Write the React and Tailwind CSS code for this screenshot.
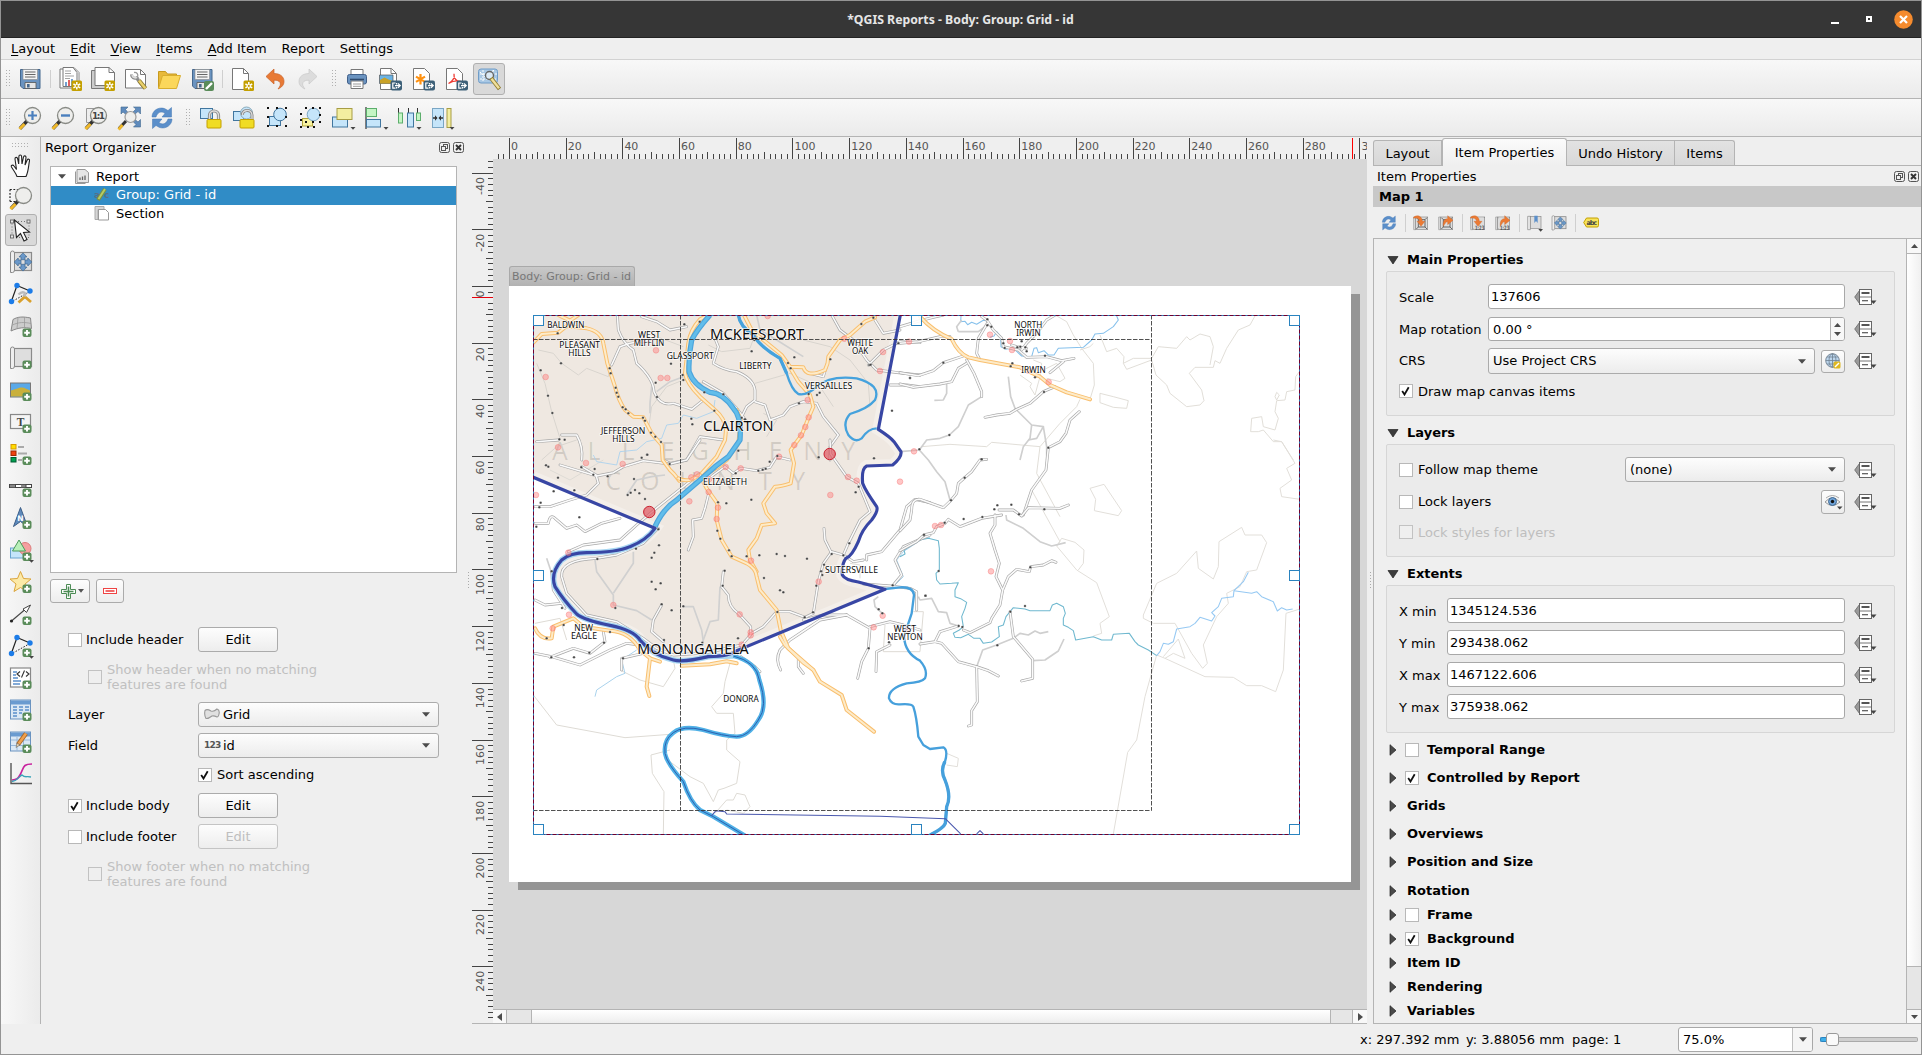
import React from "react";

/* ------------------------------------------------------------------ */
/* Icons                                                               */
/* ------------------------------------------------------------------ */

const Svg = ({ s = 24, children, className = "" }) => (
  <svg width={s} height={s} viewBox="0 0 24 24" fill="none" className={"shrink-0 overflow-visible " + className}>
    {children}
  </svg>
);

const Plus = () => (
  <g>
    <rect x="13.5" y="14.5" width="9" height="8.5" rx="2" fill="#5a8c5a" />
    <path d="M18 16v5.5M15.2 18.8h5.6" stroke="#fff" strokeWidth="1.9" />
  </g>
);
const NewBadge = () => (
  <g>
    <rect x="13.5" y="13.5" width="10.5" height="10.5" rx="1.5" fill="#c4a000" />
    <path d="M18.8 15v7.6M15.4 17l6.8 3.8M22.2 17l-6.8 3.8" stroke="#fff" strokeWidth="1.5" />
    <circle cx="18.8" cy="18.9" r="1.1" fill="#c4a000" />
  </g>
);
const ExportBadge = () => (
  <g>
    <rect x="12.5" y="13.5" width="11.5" height="10" rx="2" fill="#3d6078" />
    <path d="M17.5 16h-2.7v5.2h2.7M17 18.6h4.5M20 16.5l2.2 2.1-2.2 2.1M18.6 16v1.4M18.6 20v1.4" stroke="#fff" strokeWidth="1.2" />
  </g>
);
const DropMark = ({ x = 20, y = 21 }) => <path d={`M${x} ${y}h5l-2.5 2.8z`} fill="#444" />;
const Floppy = () => (
  <g>
    <path d="M2.5 2.5h19.500v19h-17l-2.500-2.500z" fill="#6a93c0" stroke="#45688e" />
    <rect x="5" y="2.500" width="14.500" height="10" fill="#f4f4f4" stroke="#888" strokeWidth=".6" />
    <path d="M7 5h10.500M7 7.500h10.500M7 10h10.500" stroke="#666" strokeWidth="1" />
    <path d="M7 15.500h11v6h-11z" fill="#e6e6e6" stroke="#555" strokeWidth=".8" />
    <rect x="9" y="17" width="2.600" height="3.500" fill="#45688e" />
  </g>
);
const Page = ({ x = 3 }) => <path d={`M${x} 1.500h11l5 5v16h-16z`} fill="#fff" stroke="#777" />;
const Wrench = () => (
  <g>
    <path d="M7.500 7.500c0 3 3 4.500 5 3.500l7 9" stroke="#888" strokeWidth="3" />
    <path d="M8 8c.5 2.500 3 3.500 5 2.500" stroke="#ddd" strokeWidth="1.600" />
    <path d="M10 5.500c3-.5 4.500 2 3.500 4.500l1.500 2" stroke="#999" strokeWidth="1.300" />
    <path d="M15 13.500l6.500 8" stroke="#8d7a2c" strokeWidth="4.200" />
    <path d="M15 13.500l6.300 7.700" stroke="#e9d06b" strokeWidth="2.600" />
  </g>
);
const Lens = ({ children }) => (
  <g>
    <path d="M9 15l-7 7.500" stroke="#333" strokeWidth="3.400" />
    <path d="M6.500 18l-5 5" stroke="#f0b92b" strokeWidth="3" />
    <circle cx="14.500" cy="9.500" r="8" fill="#eeeeec" stroke="#888a85" strokeWidth="1.300" />
    {children}
  </g>
);
const Refresh = () => (
  <g fill="#5b8fca" stroke="#4377b3" strokeWidth=".5">
    <path d="M2 11C2 5 8 0.500 14.500 2.500l3.500 2 3.500-3v9.500h-9.500l3-3.500c-4-3-7.500-1-9 3.500z" />
    <path d="M22 13c0 6-6 10.500-12.500 8.500l-3.500-2-3.500 3v-9.500h9.500l-3 3.500c4 3 7.500 1 9-3.500z" />
  </g>
);
const Ptr = ({ x, y, r }) => <path transform={`translate(${x} ${y}) rotate(${r})`} d="M0-3.600l4 4h-2v2.800h-4v-2.800h-2z" fill="#6a98c9" stroke="#41688f" strokeWidth=".7" />;
const Ptrs = () => (
  <g>
    <Ptr x={14} y={6.500} r={0} /><Ptr x={8.800} y={12} r={-90} /><Ptr x={19.200} y={12} r={90} /><Ptr x={14} y={17.500} r={180} />
  </g>
);
const Scroll = () => (
  <g>
    <rect x="4.500" y="2.500" width="18" height="18" fill="#dedede" stroke="#8a8a8a" strokeWidth="1.200" />
    <path d="M1.500 22.500V3q0-2 2-2t2 2v17q0 2.500-2 2.500z" fill="#eee" stroke="#8a8a8a" />
  </g>
);
const Grips = ({ at }) => <g fill="#111">{at.map(([x, y], i) => <rect key={i} x={x} y={y} width="2" height="2" />)}</g>;

const icons = {
  save: <Floppy />,
  newReport: (
    <g>
      <path d="M2 2h11l4 4v15H2z" fill="#fff" stroke="#777" /><path d="M5 .5h11l5 5v16.500" fill="#fff" stroke="#888" />
      <path d="M5 .500v19h14v-14l-4-5z" fill="#fff" stroke="#777" />
      <path d="M7 4h6M7 6.500h6M7 9h9M7 11.500h5" stroke="#999" strokeWidth=".9" />
      <path d="M8 19v-4" stroke="#729fcf" strokeWidth="2" /><path d="M11 19v-6" stroke="#e06060" strokeWidth="2" /><path d="M14 19v-7" stroke="#729fcf" strokeWidth="2" />
      <NewBadge />
    </g>
  ),
  duplicate: (
    <g>
      <path d="M.500 3.500v18h15v-18z" fill="#ccc" stroke="#777" />
      <path d="M4 .500h14l5.500 5v13H4z" fill="#fff" stroke="#777" /><path d="M18 .500v5h5.500" stroke="#777" /><NewBadge />
    </g>
  ),
  manager: (
    <g><path d="M1.500 2.500h15l5 5v13.500h-20z" fill="#fff" stroke="#777" /><path d="M16.500 2.500v5h5" stroke="#777" /><Wrench /></g>
  ),
  folder: (
    <g><path d="M1.500 21V4.500h7l2 2.500h9v4" fill="#e8b93a" stroke="#c79a1e" /><path d="M1.500 21.500L5.500 8.500h18l-4 13z" fill="#fbd75b" stroke="#d9ae2e" /></g>
  ),
  saveAs: (
    <g><Floppy /><rect x="14" y="14" width="10" height="10" rx="2" fill="#5a8c5a" /><path d="M16 22l6-6" stroke="#fff" strokeWidth="2.400" /></g>
  ),
  newPage: (
    <g><Page x={2.5} /><path d="M13.500 1.500v5h5" stroke="#777" /><NewBadge /></g>
  ),
  undo: <path d="M3 9.500L11 2v4.500c6 0 10 3 10 8 0 3.500-2.500 6-6 7.500 2-2.500 3-4.500 2-6.500-1-1.800-3-2.300-6-2.300V17z" fill="#e87a35" stroke="#c9612a" strokeWidth=".7" />,
  redo: <path d="M21 9.500L13 2v4.500c-6 0-10 3-10 8 0 3.500 2.500 6 6 7.500-2-2.500-3-4.500-2-6.500 1-1.800 3-2.300 6-2.300V17z" fill="#dcdcdc" stroke="#c8c8c8" strokeWidth=".7" />,
  print: (
    <g><path d="M6 8V2.500h12V8" fill="#fff" stroke="#777" /><rect x="2.500" y="7.500" width="19" height="9.500" rx="2" fill="#6a93c0" stroke="#41608a" /><path d="M5 12.500h14" stroke="#2f4a6d" strokeWidth="1.600" /><path d="M6 14h12v7.500H6z" fill="#fff" stroke="#777" /><path d="M8 17h8M8 19.300h8" stroke="#999" /></g>
  ),
  image: (
    <g><Page x={2.5} /><path d="M1.500 8h13.500v8.500H1.500z" fill="#6bb4e6" stroke="#555" strokeWidth=".7" /><path d="M2 16.500v-3.500l4.500-2.500 4 2 4.500 1.500v2.500z" fill="#c9a227" /><path d="M13 1.500v5h5" stroke="#777" /><ExportBadge /></g>
  ),
  svg: (
    <g><Page x={2.5} /><path d="M9.500 7v10.500M5 9.600l9 5.300M14 9.600l-9 5.300" stroke="#ff9212" strokeWidth="2.200" /><ExportBadge /></g>
  ),
  pdf: (
    <g><Page x={2.5} /><path d="M4.500 16.500c4-2 6.500-6 5.500-9.500-.8 4 3 8 7 7.500-3.500-1-9 0-12.500 2z" stroke="#ee3b33" strokeWidth="1.300" /><ExportBadge /></g>
  ),
  atlas: (
    <g><rect x="1.500" y="2" width="19" height="14" rx="2.500" fill="#a9c8e4" stroke="#6f9cc8" /><path d="M3 5l6 6 8-8M3 12h16M6 3v11M16 3v12M3 7h17" stroke="#fff" strokeWidth="1" strokeDasharray="2 1" /><circle cx="12.500" cy="8.500" r="4" fill="#dbe9f5" stroke="#666" strokeWidth="1.400" /><path d="M14 11l8.500 11" stroke="#8d7a2c" strokeWidth="4" /><path d="M14.500 11.700l7.500 9.500" stroke="#f0df9a" strokeWidth="2.400" /></g>
  ),
  zoomIn: <Lens><path d="M14.500 5v9M10 9.500h9" stroke="#4a7fbd" strokeWidth="2.200" /></Lens>,
  zoomOut: <Lens><path d="M10 9.500h9" stroke="#4a7fbd" strokeWidth="2.400" /></Lens>,
  zoom11: (
    <g><path d="M2.500 2.500h15v14h-15z" fill="#eee" stroke="#999" /><Lens><text x="14.500" y="13" textAnchor="middle" fontFamily="DejaVu Sans" fontWeight="bold" fontSize="9" fill="#444" textLength="13">1:1</text></Lens></g>
  ),
  zoomFull: (
    <g>
      <path d="M9 15l-7 7.500" stroke="#333" strokeWidth="3" /><path d="M5.500 19l-4 4.500" stroke="#f0b92b" strokeWidth="2.800" />
      <g fill="#5f8bbd" stroke="#42688f" strokeWidth=".6"><path d="M4 1h7l-2.500 2.500 2.500 3-2 2-3-2.500L4 8zM23.500 1v7l-2.500-2.500-3 2.500-2-2 3-3L16.500 1zM23.500 21h-7l2.500-2.500-3-3 2-2 3 2.500 2.500-2.500z" /></g>
      <circle cx="13.500" cy="11" r="5.500" fill="#eeeeec" stroke="#999" strokeWidth="1.200" />
    </g>
  ),
  refresh: <Refresh />,
  lock: (
    <g><rect x=".5" y="2.500" width="12" height="10" fill="#c5e5fa" stroke="#41769f" /><path d="M9.500 14V9.500c0-6 9-6 9 0V14" stroke="#888" strokeWidth="3.200" /><path d="M9.500 14V9.500c0-6 9-6 9 0V14" stroke="#ddd" strokeWidth="1.400" /><rect x="7" y="13.500" width="14" height="8.500" rx="1" fill="#f0dc24" stroke="#c4a000" /></g>
  ),
  unlock: (
    <g><rect x=".5" y="5.500" width="10" height="9" fill="#c5e5fa" stroke="#41769f" /><circle cx="13.500" cy="7" r="6" fill="#c5e5fa" stroke="#8ab" /><path d="M9.500 9c-1-5 9-7 9.500 0V14" stroke="#888" strokeWidth="3" /><path d="M9.500 9c-1-5 9-7 9.500 0V14" stroke="#ddd" strokeWidth="1.300" /><rect x="7" y="13.500" width="14" height="8.500" rx="1" fill="#f0dc24" stroke="#c4a000" /></g>
  ),
  group: (
    <g><rect x="3.500" y="10.500" width="11" height="9" fill="#c5e5fa" stroke="#41769f" /><circle cx="14" cy="8.500" r="6.300" fill="#c5e5fa" stroke="#41769f" /><Grips at={[[1, 1], [10, 1], [19, 1], [1, 10], [19, 10], [1, 19], [10, 19], [19, 19]]} /></g>
  ),
  ungroup: (
    <g><rect x="3.500" y="12.500" width="10" height="7.500" fill="#f8f3a0" stroke="#b3a63c" /><circle cx="14.500" cy="8.500" r="6.300" fill="#c5e5fa" stroke="#7aa6c4" /><Grips at={[[6, 1], [13, 1], [20, 1], [6, 15], [13, 15], [20, 8], [20, 15], [1, 7], [1, 13], [1, 20], [8, 20], [14, 20]]} /></g>
  ),
  raise: <g><rect x=".5" y="11" width="15" height="10" fill="#c5e5fa" stroke="#41769f" /><rect x="5" y="2.500" width="15" height="11" fill="#f3eea0" stroke="#a79d45" /><DropMark x={18.5} /></g>,
  align: <g><path d="M1 1v22" stroke="#333" strokeWidth="1.200" /><rect x="1.500" y="2.500" width="10" height="8" fill="#c4f5c4" stroke="#5cae6c" /><rect x="1.500" y="13.500" width="14" height="7.500" fill="#c5e5fa" stroke="#41769f" /><DropMark x={18.5} /></g>,
  distribute: <g><path d="M.5 2v6M10.500 2v6M19.500 2v6" stroke="#333" /><rect x=".5" y="7" width="4" height="10" fill="#c4f5c4" stroke="#5cae6c" /><rect x="9.500" y="7" width="6" height="14" fill="#c5e5fa" stroke="#41769f" /><rect x="18.500" y="7" width="4" height="7.500" fill="#c4f5c4" stroke="#5cae6c" /><DropMark x={18.5} /></g>,
  resize: <g><rect x="1.500" y="2.500" width="11" height="19" fill="#c5e5fa" stroke="#7aa6c4" /><path d="M2 12h3.500M12 12H8.500" stroke="#333" strokeWidth="1.300" /><path d="M4 9.300v5.400L6.500 12zM10 9.300v5.400L7.500 12z" fill="#333" /><rect x="16" y="2.500" width="4" height="19" fill="#f3eea0" stroke="#a79d45" /><DropMark x={18.5} /></g>,
  hand: <path d="M8 22.500c-1-3-3.500-6-5.500-9.500-1-2 1.500-2.500 2.500-1l2.500 3.500L6 5c-.2-2 2.200-2.200 2.600-.3L9.700 10 9.900 2.500c0-2 2.600-2 2.700 0L13 10l1.500-7c.4-1.800 2.700-1.300 2.500.5L16 11l2.200-5c.8-1.600 2.800-.8 2.300.8C19.500 11 19.700 17 17 22.500z" fill="#fff" stroke="#222" strokeWidth="1.100" />,
  zoomTool: <g><path d="M1 3.500h9M1 3.500v12M1 15.500h6" stroke="#222" strokeWidth="1.200" strokeDasharray="1.800 1.600" /><Lens /></g>,
  select: (
    <g><path d="M3 3.500h17v16H3z" stroke="#666" strokeWidth=".9" strokeDasharray="1 2" /><g fill="#e8e8e8" stroke="#666" strokeWidth=".9"><rect x="1.500" y="2" width="3" height="3" /><rect x="18" y="2" width="3" height="3" /><rect x="1.500" y="17" width="3" height="3" /></g><path d="M5.500 2l2 17.500 4-4 3.500 7.500 3-1.500-3.500-7 6-.5z" fill="#fff" stroke="#222" strokeWidth="1.100" /></g>
  ),
  moveContent: <g><Scroll /><Ptrs /></g>,
  nodes: (
    <g><path d="M2.500 19L8 3.500l13 5.500" stroke="#222" strokeWidth="1.200" /><path d="M4 19l16-9" stroke="#222" strokeDasharray="1.500 1.500" /><g fill="#1c7ce8"><circle cx="8" cy="3.500" r="2.700" /><circle cx="21" cy="9" r="2.700" /><circle cx="2.500" cy="19.500" r="2.700" /></g><path d="M15 14l7 6M9.500 20.500l6-5.500" stroke="#d9a02c" strokeWidth="2.800" /><path d="M9.500 12.500q4-4 7-1l-1 3" stroke="#bbb" strokeWidth="2.400" /></g>
  ),
  map3d: <g><path d="M4 5.500c5-3 10-3 17.500-1.500l1 10.500c-7-1.500-13-1-20.500 2.500z" fill="#ccc" stroke="#888" /><path d="M3.500 11c6-3 12-3 18.500-1.500M9 3.500l-1 11M15.500 3v11" stroke="#9a9a9a" strokeWidth=".8" /><Plus /></g>,
  addMap: <g><Scroll /><Plus /></g>,
  picture: <g><rect x="1.500" y="5" width="20" height="14" fill="#5aa9e8" stroke="#777" /><path d="M2 18.500v-6c5-1 7-3 11-3 3 0 5 2 8 3v6z" fill="#c9b03c" /><Plus /></g>,
  label: <g><rect x="1.500" y="4.500" width="20" height="14" fill="#f4f4f4" stroke="#888" strokeWidth="1.200" /><text x="11.500" y="15.500" textAnchor="middle" fontFamily="Liberation Serif" fontWeight="bold" fontSize="11.500" fill="#444">T</text><Plus /></g>,
  legend: <g><rect x="2" y="2.500" width="5" height="4.500" fill="#fd0" stroke="#d79b00" /><rect x="2" y="9" width="5" height="4.500" fill="#f04010" stroke="#a02800" /><rect x="2" y="15.500" width="5" height="4.500" fill="#00a050" stroke="#005a30" /><path d="M9 5h6M9 11.500h9M9 18h4" stroke="#aaa" strokeWidth="2" /><Plus /></g>,
  scalebar: <g><rect x=".5" y="10.500" width="22" height="3" fill="#fff" stroke="#444" strokeWidth="1" /><path d="M1 12h5.500M12 12h5" stroke="#888" strokeWidth="2.400" /><path d="M6.500 10v4M17 10v4" stroke="#444" /><Plus /></g>,
  north: <g><path d="M11.500 1.500l7 19-7-5-7 5z" fill="#5f8bbd" stroke="#3b5d86" /><text x="11.500" y="15" textAnchor="middle" fontFamily="DejaVu Sans" fontWeight="bold" fontSize="7.500" fill="#fff">N</text><Plus /></g>,
  shape: <g><rect x="1.500" y="10" width="15" height="10" fill="#c5e5fa" stroke="#6aa4cf" /><circle cx="16" cy="10.500" r="6" fill="#f5a0a0" stroke="#dd7b7b" /><path d="M10 2l6.500 11h-13z" fill="#b9f0b9" stroke="#4d9b5c" /><Plus /><DropMark x={20} y={22} /></g>,
  star: <g><path d="M11.500 1.500l3 7 7.500.5-6 5 2 7.500-6.500-4-6.500 4 2-7.500-6-5 7.500-.5z" fill="#fceaa8" stroke="#dba53c" /><Plus /></g>,
  arrow: <g><path d="M2.500 19L19 5" stroke="#444" strokeWidth="1.100" /><path d="M21.500 3l-4 7.500-3.500-3.500z" fill="#fff" stroke="#444" /><circle cx="2.500" cy="19" r="1.600" fill="#222" /><Plus /></g>,
  nodeShape: <g><path d="M2.500 19L8 3.500l13 5.500" stroke="#222" strokeWidth="1.200" /><path d="M4 19l16-9" stroke="#222" strokeDasharray="1.500 1.500" /><g fill="#1c7ce8"><circle cx="8" cy="3.500" r="2.700" /><circle cx="21" cy="9" r="2.700" /><circle cx="2.500" cy="19.500" r="2.700" /></g><Plus /><DropMark x={20} y={22} /></g>,
  html: <g><rect x="1.500" y="2" width="20" height="19" fill="#fff" stroke="#888" strokeWidth="1.200" /><path d="M4 6h4M4 9h3M4 12h5M4 15h8M4 18h7" stroke="#5b8fca" strokeWidth="1.400" /><path d="M11 5.500L8 8l3 2.500M17 5.500L20 8l-3 2.500M15.500 4.500l-3 7" stroke="#333" strokeWidth="1.100" /><Plus /></g>,
  table: <g><rect x="1.500" y="2" width="20" height="19" fill="#dbe8f4" stroke="#6a93c0" /><path d="M2 4.500h19" stroke="#6a9bd0" strokeWidth="4" /><path d="M4 9h4M4 12h4M4 15h4M4 18h4M10 9h4M10 12h4M10 15h3M16 9h4M16 12h4" stroke="#5b8fca" strokeWidth="1.300" /><Plus /></g>,
  manualTable: <g><rect x="1.500" y="2" width="20" height="19" fill="#dbe8f4" stroke="#6a93c0" /><path d="M2 4.500h19" stroke="#6a9bd0" strokeWidth="4" /><path d="M2 10h19M2 15.500h19M8 7v14M14.500 7v14" stroke="#9ab8d8" /><path d="M9 14.500L17 3.500" stroke="#a9692a" strokeWidth="4.500" /><path d="M9.500 14L17 3.500" stroke="#f0a04c" strokeWidth="2.600" /><path d="M7 17.500l1-4.500 3 2z" fill="#e8d0a8" stroke="#555" strokeWidth=".5" /><Plus /></g>,
  plot: <g><path d="M2 1v20.500h21" stroke="#555" strokeWidth="1.400" /><path d="M3 18c5 0 6-1.500 8-5s3-8 5-9.500 4-1.500 7-1.500" stroke="#c8219d" strokeWidth="1.700" /><path d="M3 19.500c6-1 8-6 10-6.500 3 3 4 1 9 2" stroke="#38a3b8" strokeWidth="1.300" /></g>,
};

const Triangle = ({ open }) => (
  <svg width="12" height="12" viewBox="0 0 12 12" className="shrink-0">
    {open ? <path d="M1 2.500h10L6 10z" fill="#3c3c3c" stroke="#222" strokeWidth=".7" /> : <path d="M3 .7v10.600L9 6z" fill="#4a4a4a" stroke="#222" strokeWidth=".7" />}
  </svg>
);
const Caret = ({ className = "" }) => (
  <svg width="8" height="5" viewBox="0 0 8 5" className={"shrink-0 " + className}><path d="M0 .3h8L4 4.700z" fill="#4c4c4c" /></svg>
);
const DockButtons = () => (
  <div className="flex gap-[3px]">
    <svg width="11" height="11" viewBox="0 0 11 11" fill="none" stroke="#555"><rect x=".5" y=".5" width="10" height="10" rx="2" /><rect x="4.500" y="2.500" width="4" height="4" /><rect x="2.500" y="4.500" width="4" height="4" fill="#efefef" /></svg>
    <svg width="11" height="11" viewBox="0 0 11 11" fill="none" stroke="#555"><rect x=".5" y=".5" width="10" height="10" rx="2" /><path d="M3 3l5 5M8 3L3 8" stroke="#333" strokeWidth="1.900" /></svg>
  </div>
);
const DataDefined = () => (
  <svg width="23" height="18" viewBox="0 0 23 18" fill="none" className="shrink-0">
    <path d="M5.500 2.500L.7 9l4.800 6.500z" fill="#9a9a9a" stroke="#666" strokeWidth=".8" />
    <rect x="5.500" y="1.500" width="12" height="15" fill="#fff" stroke="#666" />
    <path d="M7.500 5h8" stroke="#555" strokeWidth="2" /><path d="M6 9h11" stroke="#777" /><path d="M8 12.700h6" stroke="#555" strokeWidth="1.200" />
    <path d="M16.500 12.500h6L19.500 16z" fill="#444" />
  </svg>
);

/* ------------------------------------------------------------------ */
/* Controls                                                            */
/* ------------------------------------------------------------------ */

const Check = ({ on, off }) => (
  <span className={"flex size-[14px] shrink-0 items-center justify-center border " + (off ? "border-[#c2c2c2] bg-[#efefef]" : "border-[#b8b8b8] bg-white")}>
    {on && <svg width="10" height="10" viewBox="0 0 10 10"><path d="M1.200 5L3.500 8.500 7.700 1.300" fill="none" stroke="#111" strokeWidth="1.800" /></svg>}
  </span>
);
const Btn = ({ children, off, className = "" }) => (
  <span className={"flex shrink-0 items-center justify-center rounded-[3px] border bg-linear-to-b from-[#fdfdfd] to-[#ededed] " + (off ? "border-[#c4c4c4] text-[#bebebe] " : "border-[#ababab] ") + className}>{children}</span>
);
const Combo = ({ children, className = "" }) => (
  <div className={"flex items-center rounded-[3px] border border-[#ababab] bg-linear-to-b from-[#fdfdfd] to-[#ececec] pr-[8px] " + className}>
    {children}
    <Caret className="ml-auto" />
  </div>
);
const Field = ({ children, className = "" }) => (
  <div className={"flex items-center rounded-[3px] border border-[#a8a8a8] bg-white pl-[2px] " + className}>{children}</div>
);
const HHandle = ({ w }) => (
  <div className={"flex justify-center " + w}>
    <svg width="5" height="18" viewBox="0 0 5 18">
      {[0, 1, 2, 3, 4, 5].map((i) => <path key={i} d={`M0 ${i * 3 + 0.5}h1M3 ${i * 3 + 0.5}h1`} stroke="#b0b0b0" />)}
    </svg>
  </div>
);
const Sep = ({ w = "w-[6px]" }) => <div className={"flex justify-center " + w}><div className="h-[18px] w-px bg-[#cfcfcf]" /></div>;
const Tool = ({ name, on }) => (
  <div className={"flex size-[32px] shrink-0 items-center justify-center rounded-[3px] " + (on ? "border border-[#b0b0b0] bg-[#d9d9d9]" : "")}>
    <Svg>{icons[name]}</Svg>
  </div>
);

/* ------------------------------------------------------------------ */
/* Map                                                                 */
/* ------------------------------------------------------------------ */

const hwNW = [
  "M190,638L215,612L265,608L290,588L350,595Q395,605 400,640L412,700L435,770Q445,810 465,840L490,860L520,862L545,910L575,945L578,990L600,1020L612,1032L628,1052",
  "M265,555L300,572L325,555",
  "M715,555L690,568Q660,600 655,640L645,730Q650,760 690,800L735,840Q765,865 768,900L765,930L740,980L695,1030",
  "M822,555L845,600L880,630L935,675L960,710L1000,712Q1010,745 1065,720Q1075,700 1075,680L1110,630L1140,615L1185,575L1215,562",
  "M955,705L985,755L1020,795L1030,830L1015,865L995,915L962,960L972,1000L962,1060Q930,1070 915,1070L880,1120L890,1150L915,1180L875,1185L860,1225L835,1260L840,1290L860,1325",
  "M800,840L812,870L805,940L770,990L745,1010L695,1040",
];
const hwSW = [
  "M625,115Q645,125 665,118L690,105L710,145L742,190L740,240L755,300L785,350L830,370Q858,385 860,410L870,450L920,510L932,570L955,625L1030,690L1050,725L1115,765L1130,810L1212,875",
  "M195,565Q210,600 245,595L250,560L310,535L340,560L420,572Q480,575 510,630L540,655L530,740L538,768",
  "M540,655L570,665", "M635,677L720,673L770,664L800,670", "M930,590L945,615L1000,668L1030,690",
];
const hwNE = ["M60,560Q100,605 155,627Q175,670 205,682L240,690L360,712L420,740L450,765L500,787L570,808"];

const rdNW = [
  "M442,555L445,600Q460,640 490,660L500,700Q550,745 552,785Q570,830 610,820L665,838L700,810",
  "M425,705L450,650L480,640L540,630", "M515,560L560,575L600,600L650,590", "M725,600L745,650L730,700Q760,720 800,725Q850,745 855,780L855,810L830,830L810,870L815,900",
  "M855,815L885,825L900,870L940,855L960,830L1000,815L1040,820L1060,860L1105,915L1080,950L1080,990",
  "M275,915L320,915Q340,950 335,990", "M200,935L265,930", "M700,755L760,790L800,835L830,875",
  "M1085,555L1110,600L1150,630L1190,690L1220,720L1300,730L1350,735", "M1215,570L1240,610L1290,600", "M1260,765L1310,765L1350,770", "M1195,705L1240,660L1290,635L1350,638",
  "M580,990L600,1000L650,990L690,920L760,930", "M1020,730L1060,740L1075,690",
];
const rdSW = [
  "M270,75L380,108L430,98L460,80L520,62L600,72L650,60L690,0", "M195,200L240,200L300,180L350,165L385,130L378,105L335,80",
  "M195,250L235,250Q240,220 255,235L290,265L320,255L345,275L395,250L450,235", "M295,335L340,315L450,300L500,255L565,200L690,100",
  "M565,265L520,310L440,345L380,355Q270,360 275,410L290,460L350,525L440,545L520,595L560,625L610,645L690,640",
  "M195,640L245,650L330,675L420,630L470,610L510,615", "M400,575L405,605L360,640L310,625L240,652", "M195,480L225,495L275,490",
  "M715,165L705,205L695,235L668,240L670,290L655,330", "M760,395L755,440L775,465Q775,500 805,520L842,560L842,585L815,615L690,642",
  "M575,495L550,540L545,575L580,605",
  "M700,130L730,105L765,80L790,100L812,85L860,92L900,82L920,50L960,60", "M1080,0L1082,42L1130,110L1165,130L1200,215L1170,240L1135,310L1120,345L1085,335L1060,370L1045,425L1030,520L1005,532L960,515L920,515L880,560L845,580",
  "M1062,265L1065,300L1085,340", "M1190,360L1190,345L1235,335L1290,270L1310,200L1335,178L1380,188", "M1120,345L1150,365L1180,360",
  "M1130,525L1050,540L960,600L930,630Q915,660 932,690", "M1130,525L1060,525L1000,540", "M985,655L985,680L1000,700", "M1130,525L1200,565L1195,625L1175,665L1163,715", "M1200,560L1260,545L1300,555L1350,570", "M1260,615L1220,635L1218,695",
  "M805,645L855,680L870,695", "M245,395L250,450L285,505", "M455,690L455,655L520,640",
  "M1180,432L1260,438L1320,445L1340,455L1340,510", "M1270,435L1295,405L1275,360L1300,320L1380,285",
];
const minorNW = ["M545,770L540,820L540,850", "M860,555L870,600L920,630L1000,680", "M560,785L600,755L640,740"];
const minorSW = ["M375,360L380,395L430,465L430,495L500,512L545,540", "M490,335L490,370L430,460", "M750,440L745,540L720,545L698,605", "M640,500L670,500L695,570L700,605", "M230,355L245,400", "M470,165L500,120L545,110L585,105", "M1225,470L1212,480L1215,500L1237,520"];
const rdNE = [
  "M0,590L60,572L100,562L130,555", "M0,640L55,635L120,620L150,620", "M0,728L55,737L100,722L130,698L190,678", "M0,762L40,772L120,762L155,755L175,715L200,700", 
  "M245,560L262,572L280,600L305,625L310,650L355,660L380,682L440,680L485,692L522,685", "M262,580L235,625L230,670L240,690", "M490,695L450,728",
  "M465,770L430,785L390,820L350,838L330,850L290,855L255,862", "M538,845L510,870L498,910L480,935L445,953L438,1020L395,1080L370,1155",
  "M365,660L380,640L410,610L440,570L465,555", "M335,645L350,650L380,655", "M200,690L222,730L245,785L245,800",
];
const minorNE = ["M245,800L205,825L175,890L148,915L120,925L80,930L58,960L0,965", "M175,605L235,605L262,585", "M175,605L170,590L185,570", "M325,740L332,800L345,835L395,885L430,890L410,925L385,930", "M395,885L390,925L370,950L360,990", "M430,890L440,950L440,990", "M140,760L140,790L130,810L103,811"];
const rdSE = [
  "M260,58L240,60L215,95L195,112L175,130L170,160L152,182L130,203L60,178Q35,175 35,210L30,240L0,272",
  "M0,332L50,305L72,285L100,278L110,260L135,250L145,238L180,260L245,235L305,225", "M285,225L285,255L270,280L285,330L298,370L288,410L308,450L300,495L275,535L270,548L210,578L190,570", "M308,450L325,410L350,388L388,395L392,380L430,375L455,362L468,367",
  "M297,210L340,210L365,228L385,203L480,205L505,195", "M175,558L120,575L105,605L60,612",
  "M105,605L125,610L175,665L230,680L265,692L295,708", "M230,680L232,785L215,812L215,855L205,858", "M330,515L340,590L398,658L398,715L365,723",
];
const minorSE = ["M58,30L85,60L110,95L135,125L150,180", "M318,225L320,240L370,265L420,305L455,318L497,308", "M55,470L60,480L95,475L115,515L140,518L150,550L175,558", "M398,662L435,660L475,633L492,597", "M230,680L248,630L290,615L340,595L360,580L385,585L405,573L420,580L445,575"];
const muniNW = [
  "M205,660L250,670L275,700L325,735L350,715L415,740L425,700", "M200,700L225,760L245,845L270,925", "M640,650L560,620L530,600", "M715,645L755,665L840,655L860,600",
  "M700,760L640,750L590,770L545,830L535,900", "M855,760L960,730L1050,770L1090,830", "M1000,630L1080,650L1140,690L1195,760L1200,830L1140,850", "M215,990L260,950L320,930", "M890,920L920,870L880,850",
];
const muniSW = [
  "M190,765L260,855L465,893L600,883", "M580,1182L582,1055L547,1000L543,945L600,930", "M600,965L660,1010L700,1030L730,1085L745,1050L762,1045L800,1030L810,965L770,930L770,900L795,880L790,820L740,820L725,800L760,760L765,725L780,670",
  "M735,1120L770,1080L790,1080L800,1060L825,1065L840,1100L820,1120L770,1110", "M450,690L510,720L580,740L615,685L610,660", "M195,550L270,535L290,600", "M240,90L300,120L400,60", "M1140,370L1170,375L1170,415", "M1245,555L1240,635L1350,635L1360,515L1330,515",
];
const muniNE = [
  "M465,555L500,575L520,615L545,655L580,700L583,765L570,808", "M1065,558L1050,585L1015,600L980,655L960,700L945,692L940,712L885,712L868,730L905,780L912,812L900,825L860,830L810,790L800,765L768,735L755,690L680,718L670,700L672,680L650,655L620,665L600,615",
  "M670,700L700,685L755,685L775,650L830,655L860,620L870,630L900,612L930,620L940,650L930,705", "M600,790L640,800L685,812L680,835L640,832L600,818Z", "M1198,725L1187,740L1185,780L1160,785L1155,810L1130,812L1125,845L1135,865L1125,900L1090,890L1085,860L1055,865L1052,905L1075,905L1090,900L1120,935L1145,935L1180,990",
  "M1125,800L1130,787L1138,795L1130,810Z", "M65,950L150,943L260,950L275,937L420,950L410,1030L480,1160", "M540,808L530,830L480,880L420,950", "M400,690L425,700L420,740L405,795L390,770L395,760L360,735", "M430,720L470,700L495,745L480,755L440,745", "M540,660L570,650L580,640",
];
const muniSE = [
  "M1120,0L1145,5L1185,70L1160,85L1175,120L1140,145L1145,170L1200,178", "M570,145L612,133L665,212L655,227L583,212L587,178Z", "M395,150L480,305L470,318L530,390L590,428L628,530L600,550L605,580L580,588", "M470,318L485,295L525,307L552,330L550,370L535,390",
  "M770,645L735,770L710,900L683,937L640,1182", "M770,645L795,655L915,710L1000,712L1040,737L1085,737L1127,755L1150,690L1158,520L1200,507", "M730,525L770,430L830,400L890,333L895,385L940,417L955,380L957,305L1025,262L1035,285L1085,285L1100,308L1070,390L1040,395L1020,440L980,460L985,490L950,530L910,615L922,670L908,685L875,640L825,550L760,550L730,535Z",
  "M790,650L835,597L855,655L820,640L795,655", "M140,940L175,955L172,980L140,975",
];

const dotsNW = [[212,721],[273,700],[263,610],[234,797],[247,849],[419,715],[422,730],[437,773],[440,788],[445,800],[458,832],[467,838],[475,850],[519,863],[525,872],[561,801],[557,758],[603,701],[551,645],[643,583],[689,575],[638,735],[640,750],[703,787],[760,793],[733,842],[664,866],[667,883],[845,664],[853,630],[954,699],[962,715],[973,682],[1081,688],[1198,705],[1174,582],[1210,563],[1016,792],[1041,795],[1049,788],[987,820],[815,863],[825,868],[805,962],[543,908],[556,920],[573,936],[531,974],[268,928],[284,929],[1320,744],[1266,842],[1285,640],[724,875],[1202,704]];
const dotsSW = [[235,80],[228,76],[264,113],[334,82],[374,87],[370,104],[413,109],[492,117],[473,165],[482,158],[495,150],[508,160],[525,177],[251,154],[313,151],[212,188],[208,202],[328,232],[199,260],[565,268],[567,316],[553,338],[545,353],[498,326],[382,357],[545,425],[572,430],[557,448],[436,504],[276,504],[245,394],[281,555],[230,595],[420,576],[402,608],[358,638],[312,652],[244,652],[459,655],[582,600],[605,511],[575,493],[640,499],[697,608],[764,392],[758,437],[744,187],[742,272],[751,296],[777,331],[785,349],[830,349],[868,346],[920,342],[945,348],[1011,356],[882,414],[930,451],[940,457],[922,516],[1004,532],[1029,517],[1039,437],[1053,394],[1062,374],[1085,342],[1120,346],[1138,310],[1157,157],[1166,140],[1212,55],[1046,52],[844,179],[769,190],[797,100],[865,92],[878,89],[899,65],[922,48],[887,86],[599,72],[532,44],[515,53],[1268,436],[1367,467],[1362,286],[1226,508],[1237,520],[1196,625],[1257,607],[804,595],[1057,405]];
const dotsNE = [[262,568],[274,590],[262,586],[310,640],[314,654],[365,634],[361,650],[376,652],[380,664],[435,677],[337,700],[332,709],[405,742],[432,786],[130,698],[30,744],[148,915],[445,953],[58,958],[245,988],[352,652]];
const dotsSE = [[153,181],[194,113],[245,58],[72,284],[134,248],[191,237],[247,231],[283,208],[292,196],[334,194],[357,223],[433,208],[391,382],[116,393],[76,467],[176,558],[187,561],[292,616],[331,515],[375,498]];
const pinkNW = [[227,741],[572,744],[592,744],[558,661],[518,632],[264,952],[893,558],[1123,626],[1239,666],[1230,723],[1317,635],[1013,810],[1016,862],[1006,891],[993,916],[973,945],[927,980],[1332,964]];
const pinkSW = [[348,69],[458,72],[198,165],[664,112],[681,103],[717,118],[716,156],[658,184],[744,203],[740,237],[767,81],[812,85],[1081,165],[1134,111],[1160,122],[1290,125],[295,338],[430,495],[297,524],[248,565],[843,362],[1046,425],[809,523],[842,577],[842,586],[815,614],[1238,527],[1211,562],[1310,570]];
const pinkNE = [[270,614],[330,633],[336,660],[385,722],[446,756]];
const pinkSE = [[105,258],[123,255],[273,394]];

const Roads = ({ list }) => (
  <g fill="none" strokeLinejoin="round" strokeLinecap="round">
    {list.map((d, i) => <path key={i} d={d} stroke="#a8a8a8" strokeWidth="8.500" />)}
    {list.map((d, i) => <path key={i} d={d} stroke="#fbfbfb" strokeWidth="4.600" />)}
  </g>
);
const Highways = ({ list }) => (
  <g fill="none" strokeLinejoin="round" strokeLinecap="round">
    {list.map((d, i) => <path key={i} d={d} stroke="#f9bf6e" strokeWidth="12" />)}
    {list.map((d, i) => <path key={i} d={d} stroke="#fdebc9" strokeWidth="6" />)}
  </g>
);
const Lines = ({ list, color, w }) => <g fill="none" stroke={color} strokeWidth={w} strokeLinejoin="round">{list.map((d, i) => <path key={i} d={d} />)}</g>;
const Dots = ({ dots, pink }) => (
  <g>
    {pink.map(([x, y], i) => <circle key={i} cx={x} cy={y} r="8.500" fill="#ff8080" fillOpacity=".45" stroke="#f56c6c" strokeOpacity=".45" strokeWidth="2.500" />)}
    {dots.map(([x, y], i) => <circle key={i} cx={x} cy={y} r="3.800" fill="#444" stroke="#fff" strokeOpacity=".5" strokeWidth="1.500" />)}
  </g>
);
const Label = ({ x, y, w, big, children }) => (
  <text x={x} y={y} textLength={w} lengthAdjust="spacingAndGlyphs" fontSize={big ? 42 : 25} fontFamily="Noto Sans" fill="#0a0a0a" stroke="#fff" strokeOpacity=".8" strokeWidth="5" strokeLinejoin="round" style={{ paintOrder: "stroke" }}>{children}</text>
);

const county = "M190,-375H1291L1225,-32Q1262,-8 1272,5L1293,35Q1296,52 1268,75L1190,78Q1174,85 1178,130Q1185,150 1220,200Q1226,212 1205,240Q1175,270 1165,305Q1145,350 1128,355Q1115,370 1117,405Q1125,420 1165,426L1245,448L800,632Q780,648 715,650Q640,668 610,660Q545,645 510,600Q490,570 420,556Q340,540 320,522Q280,480 255,440Q240,400 275,360Q300,338 350,338Q440,338 480,320Q530,300 555,265L190,112Z";
const countyLine = county.replace("M190,-375H1291L1225,-32", "M1291,-375L1225,-32").replace("Z", "");
const monRiver = "M720,555Q680,600 665,630Q655,680 657,725Q670,765 720,787Q760,790 790,835Q815,860 810,930L775,980L735,1010L690,1050L620,1110Q580,1135 555,1190";
const lowerMon = "M790,648Q860,665 868,720Q895,800 865,840Q835,890 800,890Q760,888 700,870Q640,855 610,878Q580,900 585,940Q590,970 640,1025Q660,1085 690,1110L730,1130L825,1187";

const handles = [[533, 315], [911, 315], [1289, 315], [533, 570], [1289, 570], [533, 824], [911, 824], [1289, 824]];

function MapItem() {
  const nw = "translate(470 130) scale(.33333)";
  const sw = "translate(470 440) scale(.33333)";
  const ne = "translate(900 130) scale(.33333)";
  const se = "translate(900 440) scale(.33333)";
  return (
    <svg width="767" height="520" viewBox="533 315 767 520" className="block">
      <rect x="533" y="315" width="767" height="520" fill="#fff" />
      <g transform={sw}>
        <path d={county} fill="#efe8e1" />
        <g fill="#000" fillOpacity=".12" fontFamily="Noto Sans" fontSize="74" textAnchor="middle">
          {[["A", 270], ["L", 372], ["L", 475], ["E", 593], ["G", 690], ["H", 817], ["E", 917], ["N", 1028], ["Y", 1135]].map(([c, x]) => <text key={x} x={x} y="60">{c}</text>)}
          {[["C", 430], ["O", 540], ["U", 655], ["N", 767], ["T", 885], ["Y", 985]].map(([c, x]) => <text key={x} x={x} y="149">{c}</text>)}
        </g>
        <path d={countyLine} fill="none" stroke="#fff" strokeOpacity=".3" strokeWidth="36" />
      </g>
      <g transform={nw}><Lines list={muniNW} color="#d9d5cf" w="3" /></g>
      <g transform={sw}><Lines list={muniSW} color="#dedbd5" w="3" /></g>
      <g transform={ne}><Lines list={muniNE} color="#dfdbd5" w="2.800" /></g>
      <g transform={se}><Lines list={muniSE} color="#e2dfda" w="3" /></g>
      {/* creeks */}
      <g transform={nw}><Lines list={["M735,810L730,845L680,865L640,855L625,880L590,885L575,925L530,935L500,960L450,965L440,1005L380,995L370,975"]} color="#a9d2ef" w="2.600" /></g>
      <g transform={sw}><Lines list={["M375,770L380,750L440,710L465,700L455,660L500,630", "M1270,440L1300,410L1280,360L1300,335L1360,295L1380,293"]} color="#a9d2ec" w="3" /></g>
      <g transform={ne}><Lines list={["M183,558L182,575L195,574L203,584L215,577L230,583L250,571L262,573", "M270,622L282,618L290,605L302,620L303,650L318,658L330,655", "M340,655L365,678L395,680L402,655L410,653L415,668L432,662L445,675L462,675L475,655L550,652L575,630L585,612L610,610L640,590L655,570L650,558"]} color="#86c1ec" w="3.200" /></g>
      <g transform={se}>
        <Lines list={["M0,350L15,342L12,330L60,300L85,295L115,302L118,325L118,390L108,400L110,420L120,432L155,430L175,428L165,450L165,470L182,476L200,487L195,505L185,530L190,560L178,570L160,580L165,592L182,593L205,583L222,595L240,595L250,610L275,606L298,590L295,560L310,555L318,530L330,515L340,503L375,507L390,512L450,512L457,495L470,490L490,500L496,520L490,535L490,555L505,562L520,572L527,600L580,590L605,600L635,600L640,583L688,580L705,605L715,615L745,630L770,647"]} color="#6fb8cf" w="3.200" />
        <Lines list={["M770,647L780,635L790,610L805,613L820,605L830,567L870,560L885,550L900,532L935,543L945,528L935,518L955,500L965,475L1000,470L1002,452L1030,425L1045,397", "M1002,452L1055,460L1070,455L1085,470L1120,485L1132,513L1145,503L1160,510L1178,507"]} color="#96c9f3" w="3.200" />
      </g>
      <g transform={nw}><Lines list={minorNW} color="#d0d0d0" w="5" /></g>
      <g transform={sw}><Lines list={minorSW} color="#d0d0d0" w="5" /></g>
      <g transform={ne}><Lines list={minorNE} color="#cfcfcf" w="5" /></g>
      <g transform={se}><Lines list={minorSE} color="#cfcfcf" w="5" /></g>
      <g transform={nw}><Roads list={rdNW} /></g>
      <g transform={sw}><Roads list={rdSW} /></g>
      <g transform={ne}><Roads list={rdNE} /></g>
      <g transform={se}><Roads list={rdSE} /></g>
      <g transform={nw}><Highways list={hwNW} /></g>
      <g transform={sw}><Highways list={hwSW} /></g>
      <g transform={ne}><Highways list={hwNE} /></g>
      {/* rivers */}
      <g transform={nw} fill="none" strokeLinejoin="round">
        <path d={monRiver} stroke="#4ba4dc" strokeWidth="16" />
        <path d={monRiver} stroke="#62bdea" strokeWidth="9" />
        <path d="M805,555Q810,590 850,615Q870,650 930,685L950,730Q965,780 985,792Q1010,798 1040,770Q1080,735 1160,745Q1235,765 1215,810Q1195,835 1140,852Q1115,880 1135,915Q1155,940 1175,925Q1195,895 1220,895" stroke="#45a2dd" strokeWidth="7" />
        <path d="M805,555Q810,590 850,615Q870,650 930,685L950,730" stroke="#45a2dd" strokeWidth="10" />
      </g>
      <g transform={sw} fill="none" strokeLinejoin="round">
        <path d="M555,265Q530,300 480,320Q440,338 350,338Q300,338 275,360Q240,400 255,440Q280,480 320,522Q340,540 420,556Q490,570 510,600Q545,645 610,660Q640,668 715,650L790,648" stroke="#a9d7f2" strokeWidth="17" />
        <path d={lowerMon} stroke="#4fb0e6" strokeWidth="13" />
        <path d={lowerMon} stroke="#2c5fb0" strokeWidth="3" />
        <path d="M1245,447L1290,442Q1330,440 1332,465L1325,520L1302,590Q1305,640 1350,662Q1375,690 1365,715Q1355,728 1310,730Q1255,745 1257,775Q1265,795 1290,793Q1325,790 1330,800Q1340,830 1345,890L1360,915L1380,927L1420,922Q1435,930 1425,965Q1410,990 1425,1020Q1445,1070 1430,1100L1426,1150Q1420,1165 1380,1185" stroke="#46a0dc" strokeWidth="7" />
        <path d="M1425,965Q1410,990 1425,1020Q1445,1070 1430,1100L1426,1150Q1420,1165 1380,1185" stroke="#46a0dc" strokeWidth="10" />
        <path d="M725,1127L738,1112L765,1115L770,1122L1230,1129L1426,1136L1472,1182M1520,1182L1530,1172L1540,1182" stroke="#4a58ae" strokeWidth="3.200" />
        <path d={countyLine} stroke="#3846a4" strokeWidth="9.500" />
      </g>
      <g transform={nw}><Dots dots={dotsNW} pink={pinkNW} /></g>
      <g transform={sw}><Dots dots={dotsSW} pink={pinkSW} /></g>
      <g transform={ne}><Dots dots={dotsNE} pink={pinkNE} /></g>
      <g transform={se}><Dots dots={dotsSE} pink={pinkSE} /></g>
      <g fill="#e0555f" fillOpacity=".7" stroke="#c9202f" strokeWidth="1">
        <circle cx="829.700" cy="454" r="5.700" /><circle cx="649.300" cy="512" r="5.700" />
      </g>
      <g transform={nw}>
        <Label x={232} y={593} w={111}>BALDWIN</Label>
        <Label x={268} y={654} w={122}>PLEASANT</Label>
        <Label x={295} y={678} w={67}>HILLS</Label>
        <Label x={504} y={623} w={67}>WEST</Label>
        <Label x={491} y={648} w={92}>MIFFLIN</Label>
        <Label x={590} y={686} w={141}>GLASSPORT</Label>
        <Label x={808} y={717} w={97}>LIBERTY</Label>
        <Label x={1004} y={777} w={143}>VERSAILLES</Label>
        <Label x={1132} y={648} w={77}>WHITE</Label>
        <Label x={1146} y={671} w={49}>OAK</Label>
        <Label x={393} y={911} w={133}>JEFFERSON</Label>
        <Label x={427} y={935} w={67}>HILLS</Label>
        <Label big x={720} y={626} w={283}>MCKEESPORT</Label>
        <Label big x={700} y={904} w={211}>CLAIRTON</Label>
      </g>
      <g transform={ne}>
        <Label x={343} y={594} w={84}>NORTH</Label>
        <Label x={349} y={618} w={73}>IRWIN</Label>
        <Label x={364} y={730} w={73}>IRWIN</Label>
      </g>
      <g transform={sw}>
        <Label x={699} y={135} w={132}>ELIZABETH</Label>
        <Label x={1065} y={398} w={159}>SUTERSVILLE</Label>
        <Label x={313} y={572} w={56}>NEW</Label>
        <Label x={303} y={596} w={78}>EAGLE</Label>
        <Label x={1271} y={576} w={67}>WEST</Label>
        <Label x={1252} y={600} w={106}>NEWTON</Label>
        <Label x={760} y={785} w={106}>DONORA</Label>
        <Label big x={502} y={643} w={334}>MONONGAHELA</Label>
      </g>
      <g fill="none" stroke="#333" strokeOpacity=".85" strokeWidth="1" strokeDasharray="4.500 1.500">
        <path d="M680.500 315V810.500M533 339.500H1151.500M1151.500 315V810.500M533 810.500H1151.500" />
      </g>
      <g fill="none">
        <rect x="533.500" y="315.500" width="766" height="519" stroke="#2a83bf" />
        <rect x="533.500" y="315.500" width="766" height="519" stroke="#700030" strokeDasharray="4 2" />
      </g>
      {handles.map(([x, y], i) => <rect key={i} x={x + 0.5} y={y + 0.5} width="10" height="10" fill="#fff" fillOpacity=".9" stroke="#2a83bf" />)}
    </svg>
  );
}

/* ------------------------------------------------------------------ */
/* Rulers                                                              */
/* ------------------------------------------------------------------ */

const PX_PER_MM = 2.8346;
const range = (a, b, s) => Array.from({ length: Math.floor((b - a) / s) + 1 }, (_, i) => a + i * s);

const TopRuler = () => (
  <svg width="895" height="22" viewBox="472 137 895 22" className="block shrink-0">
    {range(-4, 302, 2).map((mm) => {
      const x = Math.round(509 + mm * PX_PER_MM) + 0.5;
      const top = mm % 20 === 0 ? 138 : mm % 10 === 0 ? 152 : 154;
      return <path key={mm} d={`M${x} ${top}V159`} stroke="#444" />;
    })}
    {range(0, 300, 20).map((mm) => <text key={mm} x={511 + mm * PX_PER_MM} y="150" fontSize="11" fontFamily="DejaVu Sans" fill="#555">{mm}</text>)}
    <path d="M1352.500 138V159" stroke="#f00" />
  </svg>
);
const SideRuler = () => (
  <svg width="21" height="864" viewBox="472 159 21 864" className="block shrink-0">
    {range(-44, 258, 2).map((mm) => {
      const y = Math.round(286 + mm * PX_PER_MM) + 0.5;
      const left = mm % 20 === 0 ? 472 : mm % 10 === 0 ? 486 : 488;
      return <path key={mm} d={`M${left} ${y}H493`} stroke="#444" />;
    })}
    {range(-40, 240, 20).map((mm) => (
      <text key={mm} transform={`translate(484 ${290.5 + mm * PX_PER_MM}) rotate(-90)`} textAnchor="end" fontSize="11" fontFamily="DejaVu Sans" fill="#555">{mm}</text>
    ))}
    <path d="M472 297.500H493" stroke="#e8000c" />
  </svg>
);

/* ------------------------------------------------------------------ */
/* Panels                                                              */
/* ------------------------------------------------------------------ */

const menus = [["L", "ayout"], ["E", "dit"], ["V", "iew"], ["I", "tems"], ["A", "dd Item"], ["", "Report"], ["", "Settings"]];
const sideTools = ["hand", "zoomTool", "select", "moveContent", "nodes", "map3d", "addMap", "picture", "label", "legend", "scalebar", "north", "shape", "star", "arrow", "nodeShape", "html", "table", "manualTable", "plot"];

const TitleBar = () => (
  <div className="relative flex h-[37px] shrink-0 items-center justify-center border-b border-[#232323] bg-[#363636]">
    <span className="mr-[1px] pt-px font-['Noto_Sans',sans-serif] text-[12.25px] font-bold text-[#e6e6e6]">*QGIS Reports - Body: Group: Grid - id</span>
    <div className="absolute right-[8px] top-0 flex h-full items-center">
      <span className="mr-[27px] mt-[7px] h-[2px] w-[8px] bg-white" />
      <span className="mr-[22px] size-[6px] border-2 border-white" />
      <svg width="19" height="19" viewBox="0 0 19 19"><circle cx="9.500" cy="9.500" r="9.300" fill="#f58b2e" /><path d="M6 6l7 7M13 6l-7 7" stroke="#fff" strokeWidth="2.200" /></svg>
    </div>
  </div>
);

const Organizer = () => (
  <section className="flex w-[424px] shrink-0 flex-col">
    <div className="flex h-[21px] items-center justify-between pl-[4px] pr-px">
      <span>Report Organizer</span>
      <DockButtons />
    </div>
    <div className="ml-[9px] mt-[8px] flex h-[407px] w-[407px] flex-col border border-[#b4b4b4] bg-white">
      <div className="flex h-[19px] items-center pl-[7px]">
        <Caret />
        <svg width="14" height="15" viewBox="0 0 14 15" className="ml-[9px] mr-[7px]" fill="none"><path d="M.5 2.500v12h10" stroke="#999" /><path d="M2 .500h8l3.500 3v10H2z" fill="#e6e6e6" stroke="#999" /><path d="M5 11V8.500M7.500 11V7.500M10 11V6.500" stroke="#666" strokeWidth="1.300" /></svg>
        Report
      </div>
      <div className="flex h-[19px] items-center bg-[#308cc6] pb-[2px] pl-[43px] text-white">
        <svg width="16" height="15" viewBox="0 0 16 15" className="mr-[6px]"><text x="0" y="11" fontSize="9" fontWeight="bold" fontFamily="DejaVu Sans" fill="#55708a">a</text><text x="10" y="11" fontSize="9" fontWeight="bold" fontFamily="DejaVu Sans" fill="#55708a">c</text><path d="M4 13L11 2" stroke="#7d8f3d" strokeWidth="4" /><path d="M4.500 12L11 2" stroke="#b5cc66" strokeWidth="2" /></svg>
        Group: Grid - id
      </div>
      <div className="flex h-[19px] items-center pb-[2px] pl-[43px]">
        <svg width="16" height="15" viewBox="0 0 16 15" className="mr-[6px]" fill="none"><path d="M1 .500h9v3H4v10H1z" fill="#d6d6d6" stroke="#aaa" /><path d="M4.500 3.500h7l3 3v7.500h-10z" fill="#fff" stroke="#999" /></svg>
        Section
      </div>
    </div>
    <div className="ml-[9px] mt-[6px] flex h-[24px] gap-[6px]">
      <Btn className="w-[40px] gap-[2px] pl-[4px]">
        <svg width="15" height="15" viewBox="0 0 15 15"><path d="M5.500.500h4v5h5v4h-5v5h-4v-5h-5v-4h5z" fill="#fff" stroke="#4b8b54" /><path d="M7.500 2.500v10M2.500 7.500h10" stroke="#4b8b54" strokeWidth="1.600" /></svg>
        <svg width="6" height="4" viewBox="0 0 6 4"><path d="M0 0h6L3 3.800z" fill="#555" /></svg>
      </Btn>
      <Btn className="w-[28px]"><svg width="14" height="6" viewBox="0 0 14 6"><rect x=".5" y=".5" width="13" height="5" fill="#fff" stroke="#ef4444" /><path d="M2.500 3h9" stroke="#ef4444" strokeWidth="1.600" /></svg></Btn>
    </div>

    <div className="ml-[27px] mt-[24px] flex flex-col">
      <div className="flex h-[25px] items-center"><Check /><span className="ml-[4px] w-[112px]">Include header</span><Btn className="h-[25px] w-[80px]">Edit</Btn></div>
      <div className="ml-[20px] mt-[10px] flex h-[30px] items-center text-[#c0c0c0]"><Check off /><span className="ml-[5px] w-[240px] leading-[15px]">Show header when no matching<br />features are found</span></div>
      <div className="mt-[10px] flex h-[25px] items-center"><span className="w-[130px]">Layer</span>
        <Combo className="h-[25px] w-[241px] pl-[5px]">
          <svg width="16" height="12" viewBox="0 0 16 12" className="mb-[2px] mr-[3px]"><path d="M1 2.500Q3 .5 7 3q3 1 6-2 3 1 2 5-.5 3-2 3-3-1.500-5-1-4 3-6 2.500Q0 7 1 2.500z" fill="#e0e0e0" stroke="#999" strokeWidth="1.100" /></svg>Grid
        </Combo>
      </div>
      <div className="mt-[6px] flex h-[25px] items-center"><span className="w-[130px]">Field</span>
        <Combo className="h-[25px] w-[241px] pl-[5px]"><span className="mb-px mr-[3px] w-[16px] text-[9px] font-bold tracking-[-0.8px] text-[#555]">123</span>id</Combo>
      </div>
      <div className="ml-[130px] mt-[10px] flex h-[14px] items-center"><Check on /><span className="ml-[5px]">Sort ascending</span></div>
      <div className="mt-[11px] flex h-[25px] items-center"><Check on /><span className="ml-[4px] w-[112px]">Include body</span><Btn className="h-[25px] w-[80px]">Edit</Btn></div>
      <div className="mt-[6px] flex h-[25px] items-center"><Check /><span className="ml-[4px] w-[112px]">Include footer</span><Btn off className="h-[25px] w-[80px]">Edit</Btn></div>
      <div className="ml-[20px] mt-[10px] flex h-[30px] items-center text-[#c0c0c0]"><Check off /><span className="ml-[5px] w-[240px] leading-[15px]">Show footer when no matching<br />features are found</span></div>
    </div>
  </section>
);

const VDots = () => (
  <svg width="3" height="18" viewBox="0 0 3 18">{[0, 1, 2, 3, 4, 5].map((i) => <path key={i} d={`M1 ${i * 3 + 0.5}h1`} stroke="#aaa" />)}</svg>
);

const CanvasArea = () => (
  <section className="flex w-[895px] shrink-0 flex-col border-b border-[#b4b4b4]">
    <TopRuler />
    <div className="flex h-[864px]">
      <SideRuler />
      <div className="flex w-[874px] flex-col">
        <div className="h-[850px] overflow-hidden bg-[#d7d7d7] pl-[16px] pt-[107px]">
          <div className="flex h-[20px] w-[126px] items-center whitespace-nowrap rounded-t-[3px] border border-b-0 border-[#a9a9a9] bg-linear-to-b from-[#c9c9c9] to-[#b2b2b2] pl-[2px] text-[11px] text-[#777]">Body: Group: Grid - id</div>
          <div className="h-[596px] w-[842px] bg-white pl-[24px] pt-[29px] shadow-[9px_8px_0_0_#959595]"><MapItem /></div>
        </div>
        <div className="flex h-[14px] border-t border-[#b4b4b4] bg-[#e6e6e6]">
          <div className="flex w-[13px] items-center justify-center bg-[#f8f8f8]"><svg width="5" height="8"><path d="M5 0v8L0 4z" fill="#4c4c4c" /></svg></div>
          <div className="w-[25px] border-l border-[#b4b4b4]" />
          <div className="w-[800px] border-x border-[#b4b4b4] bg-linear-to-b from-white to-[#ededed]" />
          <div className="flex-1" />
          <div className="flex w-[15px] items-center justify-center border-l border-[#b4b4b4] bg-[#f8f8f8]"><svg width="5" height="8"><path d="M0 0v8l5-4z" fill="#4c4c4c" /></svg></div>
        </div>
      </div>
    </div>
  </section>
);

const SectionTitle = ({ children, className = "" }) => (
  <div className={"flex h-[20px] items-center pl-[13px] font-bold " + className}><Triangle open /><span className="ml-[8px]">{children}</span></div>
);
const Collapsed = ({ label, check, mt }) => (
  <div className={"flex h-[20px] items-center pl-[13px] font-bold " + mt}>
    <Triangle />
    {check !== undefined && <span className="ml-[6px]"><Check on={check} /></span>}
    <span className="ml-[8px]">{label}</span>
  </div>
);
const GroupBox = ({ h, children }) => <div className={"ml-[12px] mt-px w-[509px] rounded-[2px] border border-[#d6d6d6] bg-[#ebebeb] pl-[12px] pt-[12px] " + h}>{children}</div>;
const PropRow = ({ children, className = "h-[25px]" }) => <div className={"flex items-center " + className}>{children}</div>;

const extents = [["X min", "1345124.536"], ["Y min", "293438.062"], ["X max", "1467122.606"], ["Y max", "375938.062"]];
const collapsed = [
  ["Temporal Range", false, "mt-[7px]"], ["Controlled by Report", true, "mt-[8px]"], ["Grids", undefined, "mt-[8px]"], ["Overviews", undefined, "mt-[8px]"],
  ["Position and Size", undefined, "mt-[8px]"], ["Rotation", undefined, "mt-[9px]"], ["Frame", false, "mt-[4px]"], ["Background", true, "mt-[4px]"],
  ["Item ID", undefined, "mt-[4px]"], ["Rendering", undefined, "mt-[4px]"], ["Variables", undefined, "mt-[4px]"],
];

const Frame = () => <g><path d="M1 3h3v19H1z" fill="#ddd" stroke="#999" /><rect x="4" y="3" width="18" height="19" fill="#ddd" stroke="#888" /><path d="M8 7h10v11H8zM5 4l3 3M21 4l-3 3M5 21l3-3M21 21l-3-3" stroke="#555" strokeWidth="1.300" /></g>;
const Orange = ({ out }) => (out ? <path d="M8 17c-1-8 2-11.500 6.500-11.500V1l8 7-8 6.500V10.300c-3 0-4 2.700-6.500 6.700z" fill="#ec7a33" stroke="#c25d20" strokeWidth=".5" /> : <path d="M1 3c7-4.500 13 0 13 6.500h4L12 17l-6-7.500h3.700C9.500 6 6.500 3.500 1 5z" fill="#ec7a33" stroke="#c25d20" strokeWidth=".5" />);
const Digits = () => <text x="7.500" y="22" fontSize="9" fontWeight="bold" fontFamily="DejaVu Sans" fill="#555" textLength="14" lengthAdjust="spacingAndGlyphs">1:23</text>;

const inactiveTab = "flex h-[25px] items-center justify-center border border-b-0 border-[#b4b4b4] bg-linear-to-b from-[#e2e2e2] to-[#d8d8d8] pb-[2px] pt-[4px] ";

const Properties = () => (
  <section className="flex w-[548px] shrink-0 flex-col">
    <div className="flex h-[29px] items-end border-b border-[#b4b4b4]">
      <div className={inactiveTab + "w-[69px] rounded-tl-[3px]"}>Layout</div>
      <div className="z-10 -mb-px flex h-[28px] w-[125px] items-center justify-center rounded-t-[3px] border border-b-0 border-[#b4b4b4] bg-linear-to-b from-[#fbfbfb] to-[#efefef]">Item Properties</div>
      <div className={inactiveTab + "w-[108px] border-l-0"}>Undo History</div>
      <div className={inactiveTab + "w-[60px] rounded-tr-[3px] border-l-0"}>Items</div>
    </div>
    <div className="flex h-[20px] items-center justify-between pl-[4px] pr-[2px]"><span className="pt-px">Item Properties</span><DockButtons /></div>
    <div className="flex h-[21px] items-center bg-[#c8c8c8] pl-[6px] font-bold">Map 1</div>
    <div className="flex h-[31px] items-center pl-[8px]">
      <Svg s={16}><Refresh /></Svg>
      <Sep w="w-[16px]" />
      <Svg s={16}><Frame /><Orange /></Svg>
      <Svg s={16} className="ml-[9px]"><Frame /><Orange out /></Svg>
      <Sep w="w-[16px]" />
      <Svg s={16}><Frame /><rect x="5" y="4" width="16" height="17" fill="#ddd" /><Digits /><Orange /></Svg>
      <Svg s={16} className="ml-[9px]"><Frame /><rect x="5" y="4" width="16" height="17" fill="#ddd" /><Digits /><Orange out /></Svg>
      <Sep w="w-[16px]" />
      <Svg s={16}><path d="M1 2h4v20H1z" fill="#eee" stroke="#888" /><rect x="5" y="2" width="16" height="18" fill="#ddd" stroke="#888" /><path d="M11 1h5v11l-2.500-3-2.500 3z" fill="#5b8fca" /><path d="M17 21h7l-3.500 4z" fill="#444" /></Svg>
      <Svg s={16} className="ml-[8px]"><Scroll /><Ptrs /></Svg>
      <Sep w="w-[16px]" />
      <svg width="16" height="11" viewBox="0 0 16 11"><path d="M.7 5.500L3.500 1h10.500q1.500 0 1.500 1.500v6q0 1.500-1.500 1.500H3.500z" fill="#f7e35a" stroke="#c4a000" /><text x="3.500" y="8" fontSize="6.500" fontWeight="bold" fontFamily="DejaVu Sans" fill="#444" textLength="10.500">abc</text></svg>
    </div>
    <div className="flex h-[786px] overflow-hidden border border-r-0 border-[#b4b4b4]">
      <div className="flex w-[532px] flex-col pt-[11px]">
        <SectionTitle>Main Properties</SectionTitle>
        <GroupBox h="h-[145px]">
          <PropRow><span className="w-[89px] pt-[2px]">Scale</span><Field className="h-[25px] w-[357px]">137606</Field><span className="ml-[9px]"><DataDefined /></span></PropRow>
          <PropRow className="mt-[8px] h-[24px]"><span className="w-[89px] whitespace-nowrap pt-px">Map rotation</span>
            <div className="flex h-[24px] w-[357px] overflow-hidden rounded-[3px] border border-[#a8a8a8] bg-white">
              <span className="flex flex-1 items-center pl-[4px] pt-px">0.00 °</span>
              <span className="flex w-[14px] flex-col items-center justify-center gap-[5px] border-l border-[#b4b4b4] bg-[#f8f8f8]">
                <svg width="7" height="4"><path d="M0 4h7L3.500 0z" fill="#4c4c4c" /></svg><svg width="7" height="4"><path d="M0 0h7L3.500 4z" fill="#4c4c4c" /></svg>
              </span>
            </div>
            <span className="ml-[9px]"><DataDefined /></span>
          </PropRow>
          <PropRow className="mt-[7px] h-[26px]"><span className="w-[89px]">CRS</span><Combo className="h-[26px] w-[327px] pl-[4px]">Use Project CRS</Combo>
            <Btn className="ml-[6px] h-[23px] w-[24px]"><svg width="16" height="16" viewBox="0 0 16 16" fill="none"><circle cx="7.500" cy="7.500" r="6.800" fill="#bcd6ee" stroke="#7b8a98" /><path d="M.7 7.500h13.600M7.500.7v13.600M2 4h11M2 11h11" stroke="#6f8090" strokeWidth=".8" /><ellipse cx="7.500" cy="7.500" rx="3.500" ry="6.800" stroke="#6f8090" strokeWidth=".8" /><rect x="8.500" y="8.500" width="7" height="7" rx="1.500" fill="#e0b820" /><path d="M10 14l4-4" stroke="#fff" strokeWidth="1.500" /></svg></Btn>
            <span className="ml-[9px]"><DataDefined /></span>
          </PropRow>
          <div className="mt-[10px] flex h-[14px] items-center"><Check on /><span className="ml-[5px] pt-px">Draw map canvas items</span></div>
        </GroupBox>

        <SectionTitle className="mt-[7px]">Layers</SectionTitle>
        <GroupBox h="h-[113px]">
          <PropRow><Check /><span className="ml-[5px] w-[207px]">Follow map theme</span><Combo className="h-[25px] w-[220px] pl-[4px]">(none)</Combo><span className="ml-[9px]"><DataDefined /></span></PropRow>
          <PropRow className="mt-[7px] h-[25px]"><Check /><span className="ml-[5px] w-[403px]">Lock layers</span>
            <Btn className="h-[24px] w-[24px]"><svg width="18" height="16" viewBox="0 0 18 16" fill="none" className="overflow-visible"><path d="M1 8q7-8 15 0-8 7-15 0z" fill="#f4f4f4" stroke="#999" /><path d="M2 4q6-5 13 0" stroke="#aaa" /><circle cx="8.500" cy="7.500" r="4" fill="#6fa3d8" stroke="#41688f" /><circle cx="8.500" cy="7.500" r="1.700" fill="#111" /><path d="M13 12.500h5.500L15.700 15.500z" fill="#444" /></svg></Btn>
            <span className="ml-[9px]"><DataDefined /></span>
          </PropRow>
          <div className="mt-[11px] flex h-[14px] items-center text-[#bebebe]"><Check off /><span className="ml-[5px] pt-px">Lock styles for layers</span></div>
        </GroupBox>

        <SectionTitle className="mt-[7px]">Extents</SectionTitle>
        <GroupBox h="h-[148px]">
          <div className="flex flex-col gap-[7px]">
            {extents.map(([k, v]) => (
              <PropRow key={k}><span className="w-[48px] whitespace-nowrap pt-[2px]">{k}</span><Field className="h-[25px] w-[398px]">{v}</Field><span className="ml-[9px]"><DataDefined /></span></PropRow>
            ))}
          </div>
        </GroupBox>
        {collapsed.map(([l, c, mt]) => <Collapsed key={l} label={l} check={c} mt={mt} />)}
      </div>
      <div className="flex w-[15px] flex-col border-l border-[#b4b4b4] bg-[#e6e6e6]">
        <div className="flex h-[14px] items-center justify-center bg-[#f8f8f8]"><svg width="7" height="4"><path d="M0 4h7L3.500 0z" fill="#4c4c4c" /></svg></div>
        <div className="h-[714px] border-y border-[#b4b4b4] bg-linear-to-r from-white to-[#f0f0f0]" />
        <div className="flex-1" />
        <div className="flex h-[14px] items-center justify-center border-t border-[#b4b4b4] bg-[#f8f8f8]"><svg width="7" height="4"><path d="M0 0h7L3.500 4z" fill="#4c4c4c" /></svg></div>
      </div>
    </div>
  </section>
);

const StatusBar = () => (
  <div className="flex h-[30px] shrink-0 items-center justify-end pr-[3px] pt-px">
    <span className="w-[106px] whitespace-nowrap">x: 297.392 mm</span>
    <span className="w-[106px] whitespace-nowrap">y: 3.88056 mm</span>
    <span className="w-[106px]">page: 1</span>
    <div className="flex h-[25px] w-[135px] items-center rounded-[3px] border border-[#a8a8a8] bg-white pl-[4px]">
      75.0%
      <span className="ml-auto flex h-full w-[20px] items-center justify-center rounded-r-[2px] border-l border-[#c0c0c0] bg-[#f5f5f5]"><Caret /></span>
    </div>
    <div className="ml-[7px] flex w-[98px] items-center">
      <span className="h-[5px] w-[6px] rounded-l-[2px] border border-r-0 border-[#2a83bf] bg-[#3daee9]" />
      <span className="h-[13px] w-[13px] rounded-[3px] border border-[#999] bg-[#fafafa]" />
      <span className="h-[5px] flex-1 rounded-r-[2px] border border-l-0 border-[#aaa] bg-[#cfcfcf]" />
    </div>
  </div>
);

export default function App() {
  return (
    <div className="flex h-[1055px] w-[1922px] flex-col overflow-hidden border border-[#949494] bg-[#efefef] font-['DejaVu_Sans',sans-serif] text-[13px] leading-[16px] text-black">
      <TitleBar />
      <nav className="flex h-[22px] shrink-0 items-center gap-[15px] border-b border-[#d2d2d2] pl-[10px]">
        {menus.map(([u, rest]) => <span key={rest}><span className="underline underline-offset-2">{u}</span>{rest}</span>)}
      </nav>
      <div className="flex h-[39px] shrink-0 items-center gap-px border-b border-[#b4b4b4] bg-linear-to-b from-[#f8f8f8] to-[#ebebeb]">
        <HHandle w="w-[12px] pl-[3px]" />
        <Tool name="save" />
        <Sep />
        {["newReport", "duplicate", "manager", "folder", "saveAs"].map((n) => <Tool key={n} name={n} />)}
        <Sep />
        {["newPage", "undo", "redo"].map((n) => <Tool key={n} name={n} />)}
        <HHandle w="w-[15px] pl-[4px]" />
        {["print", "image", "svg", "pdf"].map((n) => <Tool key={n} name={n} />)}
        <Tool name="atlas" on />
      </div>
      <div className="flex h-[38px] shrink-0 items-center gap-px border-b border-[#b4b4b4] bg-linear-to-b from-[#f8f8f8] to-[#ebebeb]">
        <HHandle w="w-[12px] pl-[3px]" />
        {["zoomIn", "zoomOut", "zoom11", "zoomFull", "refresh"].map((n) => <Tool key={n} name={n} />)}
        <HHandle w="w-[16px] pl-[3px]" />
        {["lock", "unlock", "group", "ungroup", "raise", "align", "distribute", "resize"].map((n) => <Tool key={n} name={n} />)}
      </div>
      <main className="flex h-[887px] shrink-0">
        <aside className="flex w-[40px] shrink-0 flex-col items-center border-r border-[#b4b4b4] bg-linear-to-r from-[#f8f8f8] to-[#ebebeb]">
          <svg width="18" height="13" viewBox="0 0 18 13" className="shrink-0">{[0, 1, 2, 3, 4, 5].map((i) => <path key={i} d={`M${i * 3 + 0.5} 6v1M${i * 3 + 0.5} 9v1`} stroke="#b0b0b0" />)}</svg>
          {sideTools.map((n) => <Tool key={n} name={n} on={n === "select"} />)}
        </aside>
        <Organizer />
        <div className="flex w-[7px] items-center justify-center"><VDots /></div>
        <CanvasArea />
        <div className="flex w-[6px] items-center justify-center"><VDots /></div>
        <Properties />
      </main>
      <StatusBar />
    </div>
  );
}
